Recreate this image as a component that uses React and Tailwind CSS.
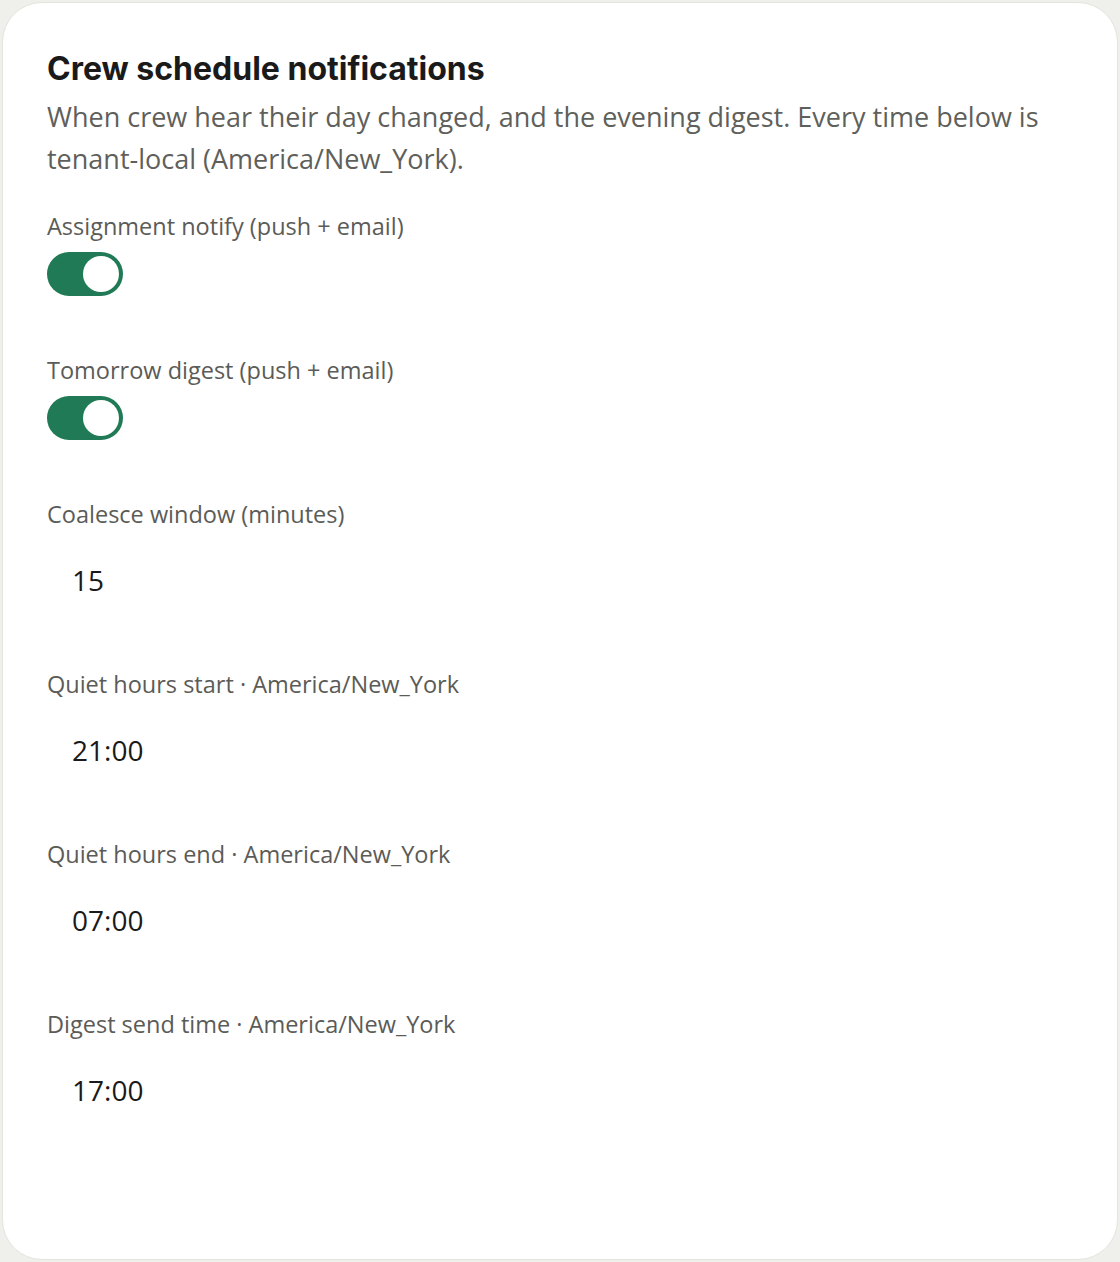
import { useState } from "react";

function Toggle({ on, onChange }) {
  return (
    <button
      type="button"
      onClick={() => onChange(!on)}
      className={`flex h-[44px] w-[76px] items-center rounded-full px-[4px] ${
        on ? "justify-end bg-[#1f7a55]" : "justify-start bg-[#cfcfca]"
      }`}
    >
      <span className="block h-[36px] w-[36px] rounded-full bg-white" />
    </button>
  );
}

function Label({ children }) {
  return (
    <div className="h-[30px] text-[23.5px] leading-[30px] text-[#5b5b57]">
      {children}
    </div>
  );
}

function TimeField({ label, value }) {
  return (
    <div className="mb-[49px]">
      <Label>{label}</Label>
      <div className="mt-[11px] flex h-[80px] items-center px-[25px] text-[28px] text-[#1a1a1a]">
        {value}
      </div>
    </div>
  );
}

export default function App() {
  const [assign, setAssign] = useState(true);
  const [digest, setDigest] = useState(true);

  return (
    <div
      className="min-h-screen bg-[#efefeb] p-[2px]"
      style={{ fontFamily: '"Open Sans", sans-serif' }}
    >
      <div className="h-[1258px] rounded-[40px] border border-[#e4e4df] bg-white px-[44px] pt-[46px]">
        <h1
          className="text-[32px] font-bold leading-[40px] text-[#1a1a1a]"
          style={{ fontFamily: "Inter, sans-serif" }}
        >
          Crew schedule notifications
        </h1>
        <p className="mt-[7px] max-w-[1010px] text-[27px] leading-[42px] text-[#5f5f5b]">
          When crew hear their day changed, and the evening digest. Every time
          below is tenant-local (America/New_York).
        </p>

        <div className="mt-[31px]">
          <div className="mb-[59px]">
            <Label>Assignment notify (push + email)</Label>
            <div className="mt-[11px]">
              <Toggle on={assign} onChange={setAssign} />
            </div>
          </div>
          <div className="mb-[59px]">
            <Label>Tomorrow digest (push + email)</Label>
            <div className="mt-[11px]">
              <Toggle on={digest} onChange={setDigest} />
            </div>
          </div>
          <TimeField label="Coalesce window (minutes)" value="15" />
          <TimeField label="Quiet hours start · America/New_York" value="21:00" />
          <TimeField label="Quiet hours end · America/New_York" value="07:00" />
          <TimeField label="Digest send time · America/New_York" value="17:00" />
        </div>
      </div>
    </div>
  );
}
